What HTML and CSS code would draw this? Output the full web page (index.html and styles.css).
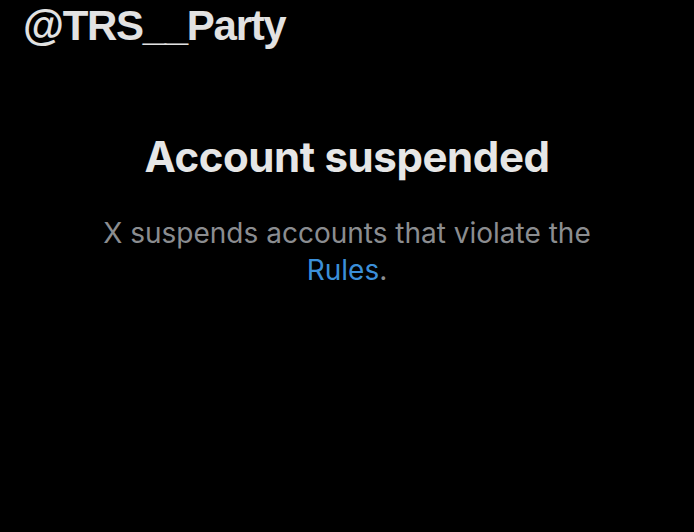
FILE: index.html
```html
<!DOCTYPE html>
<html lang="en">
<head>
<meta charset="utf-8">
<title>@TRS__Party</title>
<link rel="stylesheet" href="styles.css">
</head>
<body>
<div class="page">
  <header class="handle">@TRS__Party</header>
  <main class="notice">
    <h1 class="title">Account suspended</h1>
    <p class="desc">X suspends accounts that violate the <a class="link" href="#">Rules</a>.</p>
  </main>
</div>
</body>
</html>
```
FILE: styles.css
```css
html, body {
  margin: 0;
  padding: 0;
  background: #000;
}
.page {
  width: 694px;
  height: 532px;
  background: #000;
  overflow: hidden;
}
.handle {
  padding: 4px 0 0 23px;
  font-family: "Liberation Sans", Arial, sans-serif;
  font-weight: 700;
  font-size: 42px;
  line-height: 44px;
  letter-spacing: -1.3px;
  color: #e2e2e2;
}
.notice {
  padding: 83px 0 0;
  text-align: center;
  font-family: Inter, "Noto Sans", sans-serif;
}
.title {
  margin: 0;
  font-size: 42px;
  font-weight: 700;
  line-height: 52px;
  color: #e6e6e6;
  letter-spacing: -0.4px;
}
.desc {
  margin: 32px auto 0;
  max-width: 520px;
  font-size: 28px;
  line-height: 37px;
  color: #8b8d90;
}
.link {
  color: #3b8fd9;
  text-decoration: none;
}
```
